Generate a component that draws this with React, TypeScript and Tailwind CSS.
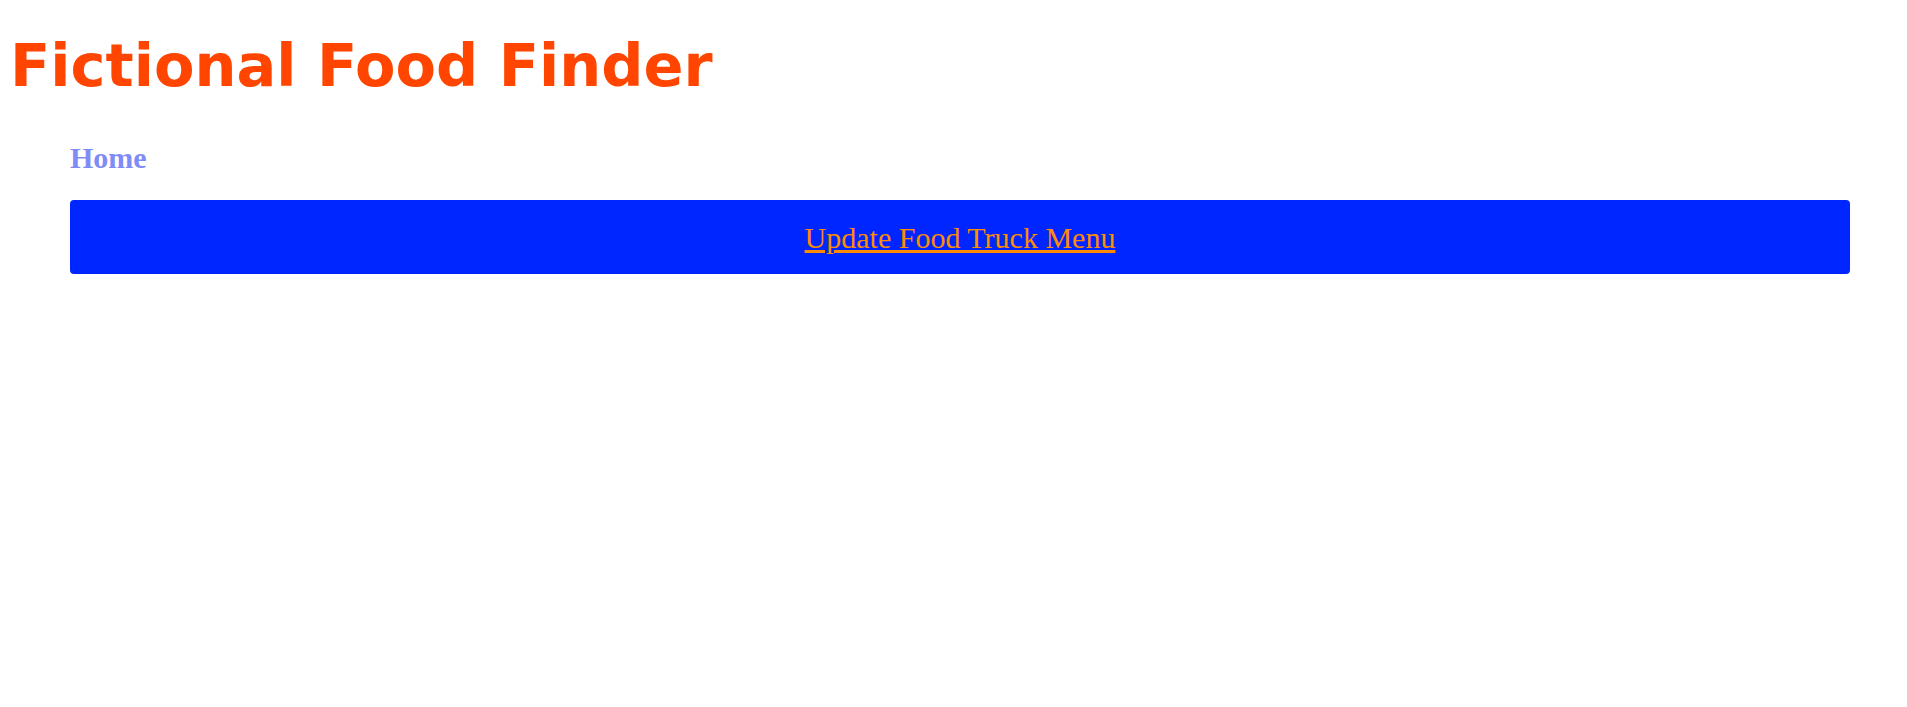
import React from "react";

export default function App() {
  return (
    <div className="min-h-screen bg-white">
      <h1 className="m-0 pl-[10px] pt-[31px] font-['DejaVu_Sans',Verdana,sans-serif] text-[59px] font-bold leading-[70px] text-[#ff4500]">
        Fictional Food Finder
      </h1>
      <div className="ml-[70px] mr-[57px] flex flex-col">
        <h2 className="m-0 mt-[39px] font-['Liberation_Serif','Times_New_Roman',serif] text-[30px] font-bold leading-[35px] text-[#7f8cf5]">
          Home
        </h2>
        <div className="mt-[25px] flex h-[74px] items-center justify-center rounded-[4px] bg-[#0026ff]">
          <a
            href="#"
            className="font-['Liberation_Serif','Times_New_Roman',serif] text-[30px] leading-[35px] text-[#ff8c00] underline"
          >
            Update Food Truck Menu
          </a>
        </div>
      </div>
    </div>
  );
}
